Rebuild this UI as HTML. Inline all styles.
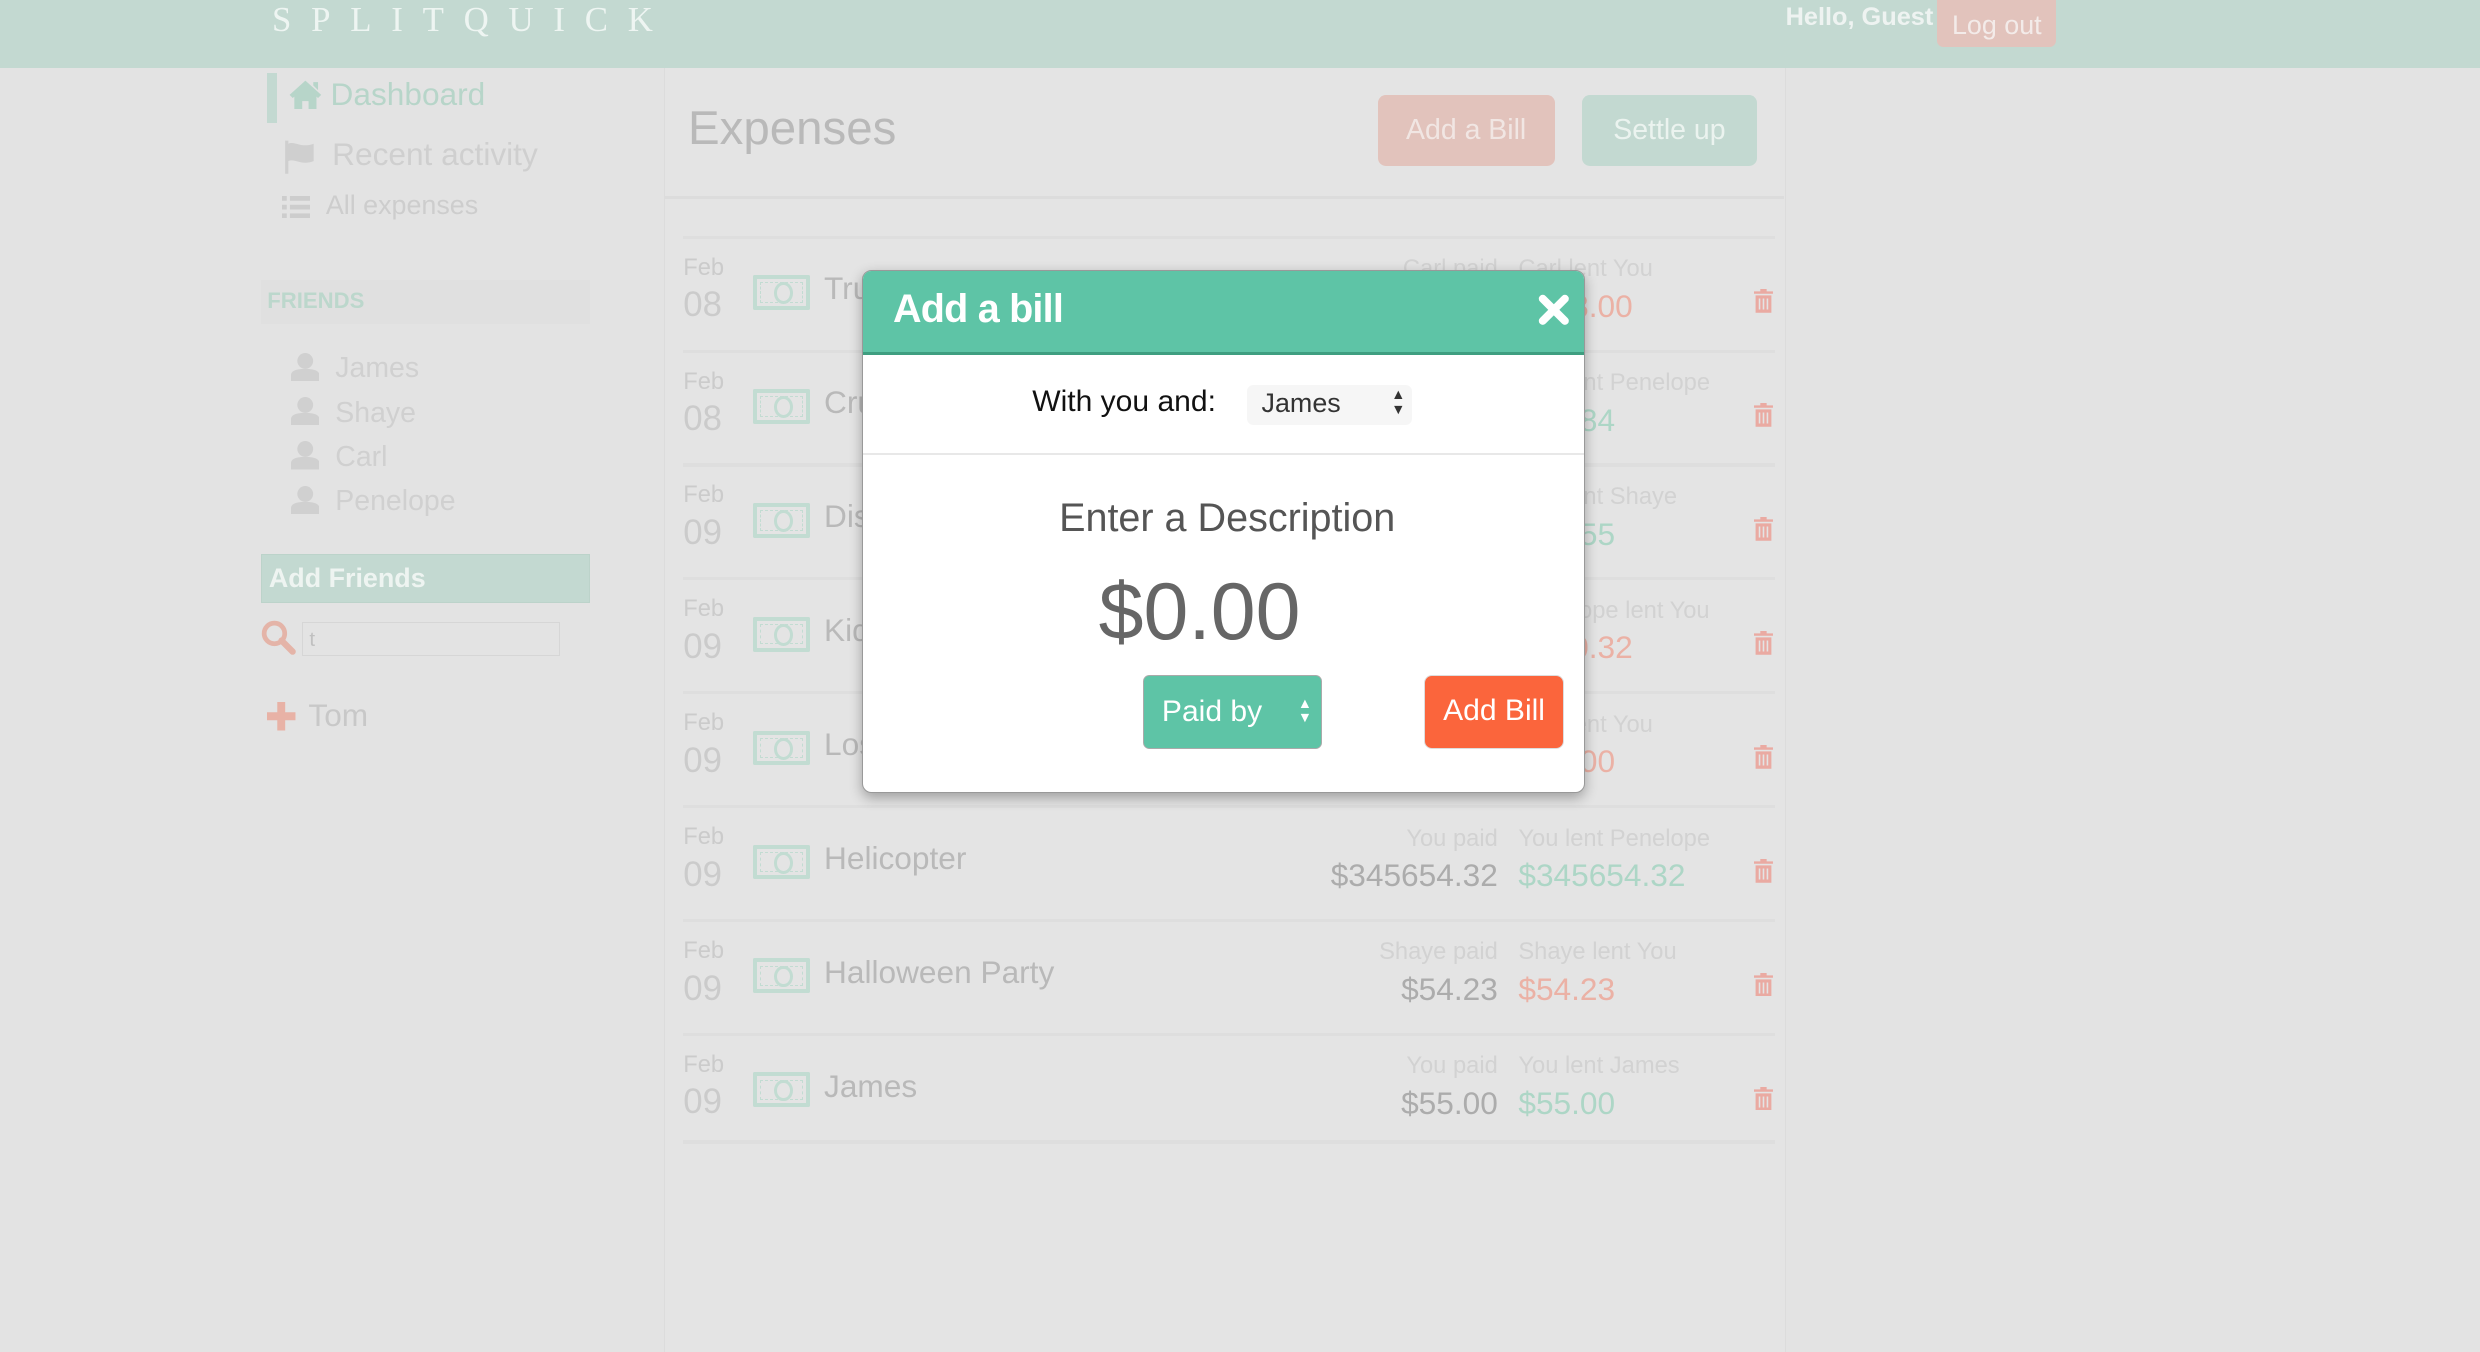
<!DOCTYPE html><html><head><meta charset="utf-8"><style>
html{zoom:1.58163}
body{margin:0;width:1568px;height:855px;background:#e3e3e3;font-family:"Liberation Sans",sans-serif;position:relative;overflow:hidden}
.a{position:absolute;white-space:nowrap}
.hdr{left:0;top:0;width:1568px;height:43px;background:#c3d9d1}
.sep{position:absolute;left:432px;width:690px;height:2px;background:#dedede}
.bill{position:absolute;width:36px;height:22px;box-sizing:border-box;border:3px solid #c2dcd2;background:#e4e4e4;border-radius:1px}
.bill:before{content:"";position:absolute;left:2px;top:2px;right:2px;bottom:2px;border:1px dashed #c2dcd2}
.bill:after{content:"";position:absolute;left:11px;top:2px;width:8px;height:10px;border-radius:50%;border:2px solid #c2dcd2;background:#e4e4e4}
.pf{position:absolute;left:184px}
</style></head><body>
<div class="a hdr"></div>
<div class="a" style="left:172px;top:0px;font-family:'Liberation Serif',serif;font-size:22px;letter-spacing:12.5px;color:#eef5f2">SPLITQUICK</div>
<div class="a" style="left:1129px;top:2px;font-size:16px;color:#eef3f1;font-weight:bold">Hello, Guest</div>
<div class="a" style="left:1225px;top:-4px;width:75px;height:34px;background:#e2c3bc;border-radius:4px;color:#f3ebe9;font-size:17px;text-align:center;line-height:40px">Log out</div>
<div class="a" style="left:420px;top:43px;width:708px;height:812px;background:#e4e4e4;border-left:1px solid #dcdcdc;border-right:1px solid #dcdcdc"></div>
<div class="a" style="left:420px;top:124px;width:708px;height:2px;background:#dcdcdc"></div>
<div class="a" style="left:169px;top:46px;width:6px;height:32px;background:#c3d9d1"></div>
<svg class="a" style="left:182px;top:50px" width="22" height="20" viewBox="0 0 22 20"><path d="M11 1 L1 10 L3 12 L11 5 L19 12 L21 10 Z M4 11 V19 H9 V14 H13 V19 H18 V11 L11 5 Z M16 2 H19 V7 L16 4Z" fill="#b7d5c9"/></svg>
<div class="a" style="left:209px;top:48px;font-size:20px;color:#b7d5c9">Dashboard</div>
<svg class="a" style="left:178px;top:88px" width="22" height="22" viewBox="0 0 22 22"><path d="M2 1 H4 V22 H2Z M4 3 C8 1 12 6 20 3 V14 C12 17 8 12 4 14Z" fill="#cfcfcf"/></svg>
<div class="a" style="left:210px;top:86px;font-size:20px;color:#cfcfcf">Recent activity</div>
<svg class="a" style="left:178px;top:124px" width="18" height="14" viewBox="0 0 18 14"><path d="M0 0h3v3H0zM5 0h13v3H5zM0 5.5h3v3H0zM5 5.5h13v3H5zM0 11h3v3H0zM5 11h13v3H5z" fill="#cdcdcd"/></svg>
<div class="a" style="left:206px;top:120px;font-size:17px;color:#cdcdcd">All expenses</div>
<div class="a" style="left:165px;top:177px;width:208px;height:28px;background:#e0e0e0"></div>
<div class="a" style="left:169px;top:182px;font-size:14px;color:#bcd7cc;font-weight:bold">FRIENDS</div>
<svg class="pf" style="top:223px" width="18" height="18" viewBox="0 0 18 18"><circle cx="9" cy="5" r="5" fill="#d0d0d0"/><path d="M0 18 V14 C0 11 4 10 9 10 C14 10 18 11 18 14 V18Z" fill="#d0d0d0"/></svg>
<svg class="pf" style="top:251px" width="18" height="18" viewBox="0 0 18 18"><circle cx="9" cy="5" r="5" fill="#d0d0d0"/><path d="M0 18 V14 C0 11 4 10 9 10 C14 10 18 11 18 14 V18Z" fill="#d0d0d0"/></svg>
<svg class="pf" style="top:279px" width="18" height="18" viewBox="0 0 18 18"><circle cx="9" cy="5" r="5" fill="#d0d0d0"/><path d="M0 18 V14 C0 11 4 10 9 10 C14 10 18 11 18 14 V18Z" fill="#d0d0d0"/></svg>
<svg class="pf" style="top:307px" width="18" height="18" viewBox="0 0 18 18"><circle cx="9" cy="5" r="5" fill="#d0d0d0"/><path d="M0 18 V14 C0 11 4 10 9 10 C14 10 18 11 18 14 V18Z" fill="#d0d0d0"/></svg>
<div class="a" style="left:212px;top:219px;font-size:18px;color:#d0d0d0;line-height:28px">James<br>Shaye<br>Carl<br>Penelope</div>
<div class="a" style="left:165px;top:350px;width:207px;height:30px;background:#c3d9d1;border:1px solid #bcd3ca"></div>
<div class="a" style="left:170px;top:356px;font-size:17px;color:#eef4f1;font-weight:bold">Add Friends</div>
<svg class="a" style="left:165px;top:392px" width="22" height="22" viewBox="0 0 22 22"><circle cx="8.5" cy="8.5" r="6.5" fill="none" stroke="#e4b4a8" stroke-width="3"/><path d="M13 13 L20 20" stroke="#e4b4a8" stroke-width="4" stroke-linecap="round"/></svg>
<div class="a" style="left:191px;top:393px;width:163px;height:22px;border:1px solid #d6d6d6;font-size:13px;color:#c0c0c0;line-height:22px;padding-left:4px;box-sizing:border-box">t</div>
<svg class="a" style="left:169px;top:444px" width="18" height="18" viewBox="0 0 18 18"><path d="M6.5 0h5v6.5H18v5h-6.5V18h-5v-6.5H0v-5h6.5z" fill="#e8b2a6"/></svg>
<div class="a" style="left:195px;top:441px;font-size:20px;color:#c8c8c8">Tom</div>
<div class="a" style="left:435px;top:64px;font-size:30px;color:#b9b9b9">Expenses</div>
<div class="a" style="left:871px;top:60px;width:112px;height:45px;background:#e2c3bc;border-radius:5px;color:#f1e6e3;font-size:18px;text-align:center;line-height:45px">Add a Bill</div>
<div class="a" style="left:1000px;top:60px;width:111px;height:45px;background:#c3d9d1;border-radius:5px;color:#ebf3ef;font-size:18px;text-align:center;line-height:45px">Settle up</div>
<div id="rows"></div>
<script>
var d=[["08","Tru","Carl paid","","Carl lent You","$543.00","r"],["08","Cru","","","You lent Penelope","$13.84","g"],["09","Dis","","","You lent Shaye","$14.55","g"],["09","Kid","","","Penelope lent You","$100.32","r"],["09","Los","","","Carl lent You","$30.00","r"],["09","Helicopter","You paid","$345654.32","You lent Penelope","$345654.32","g"],["09","Halloween Party","Shaye paid","$54.23","Shaye lent You","$54.23","r"],["09","James","You paid","$55.00","You lent James","$55.00","g"]];
var h="";d.forEach(function(r,i){var y=150+i*72;
h+='<div class="sep" style="top:'+(y-1)+'px"></div>';
h+='<div class="a" style="left:432px;top:'+(y+11)+'px;font-size:15px;color:#cbcbcb">Feb</div>';
h+='<div class="a" style="left:432px;top:'+(y+31)+'px;font-size:22px;color:#cbcbcb">'+r[0]+'</div>';
h+='<div class="bill" style="left:476px;top:'+(y+24)+'px"></div>';
h+='<div class="a" style="left:521px;top:'+(y+21)+'px;font-size:20px;color:#b9b9b9">'+r[1]+'</div>';
h+='<div class="a" style="right:621px;top:'+(y+12)+'px;font-size:15px;color:#d2d2d2">'+r[2]+'</div>';
h+='<div class="a" style="right:621px;top:'+(y+32)+'px;font-size:20px;color:#acacac">'+r[3]+'</div>';
h+='<div class="a" style="left:960px;top:'+(y+12)+'px;font-size:15px;color:#d2d2d2">'+r[4]+'</div>';
h+='<div class="a" style="left:960px;top:'+(y+32)+'px;font-size:20px;color:'+(r[6]=="r"?"#ebb1a5":"#add6c6")+'">'+r[5]+'</div>';
h+='<svg class="a" style="left:1109px;top:'+(y+33)+'px" width="12" height="15" viewBox="0 0 12 15"><path d="M4 0h4v1.5h4V3H0V1.5h4z M1 4h10v11H1z" fill="#eaaaa2"/><path d="M3.5 6v7M6 6v7M8.5 6v7" stroke="#e4e4e4" stroke-width="1"/></svg>';});
h+='<div class="sep" style="top:721px"></div>';
document.getElementById("rows").innerHTML=h;
</script>
<div class="a" style="left:545px;top:171px;width:456px;height:329px;background:#fff;border:1px solid #999;border-radius:6px;box-shadow:0 3px 8px rgba(0,0,0,.3);overflow:hidden">
 <div style="position:absolute;left:0;top:0;width:456px;height:51px;background:#5ec4a6;border-bottom:2px solid #3f9e80"></div>
 <div class="a" style="left:19px;top:10px;font-size:25px;color:#fff;font-weight:bold;letter-spacing:-.5px">Add a bill</div>
 <svg class="a" style="left:427px;top:14px" width="20" height="20" viewBox="0 0 20 20"><path d="M3 3 L17 17 M17 3 L3 17" stroke="#fff" stroke-width="5" stroke-linecap="round"/></svg>
 <div class="a" style="left:107px;top:72px;font-size:19px;color:#111">With you and:</div>
 <div class="a" style="left:243px;top:72px;width:104px;height:25px;background:#f6f6f6;border-radius:4px"></div>
 <div class="a" style="left:252px;top:74px;font-size:17px;color:#333">James</div>
 <div class="a" style="left:334px;top:74px;font-size:9px;color:#333;line-height:9px">▲<br>▼</div>
 <div style="position:absolute;left:0;top:115px;width:456px;height:1px;background:#e8e8e8"></div>
 <div class="a" style="left:124px;top:142px;font-size:25px;color:#555">Enter a Description</div>
 <div class="a" style="left:149px;top:186px;font-size:51px;color:#666">$0.00</div>
 <div class="a" style="left:177px;top:255px;width:113px;height:47px;background:#5ec4a6;border-radius:4px;border:1px solid #aaa;box-sizing:border-box"></div>
 <div class="a" style="left:189px;top:268px;font-size:19px;color:#fff">Paid by</div>
 <div class="a" style="left:275px;top:269px;font-size:9px;color:#fff;line-height:9px">▲<br>▼</div>
 <div class="a" style="left:355px;top:255px;width:88px;height:47px;background:#fb653c;border-radius:5px;border:1px solid #ddd;box-sizing:border-box;color:#fff;font-size:19px;text-align:center;line-height:44px">Add Bill</div>
</div>
</body></html>
